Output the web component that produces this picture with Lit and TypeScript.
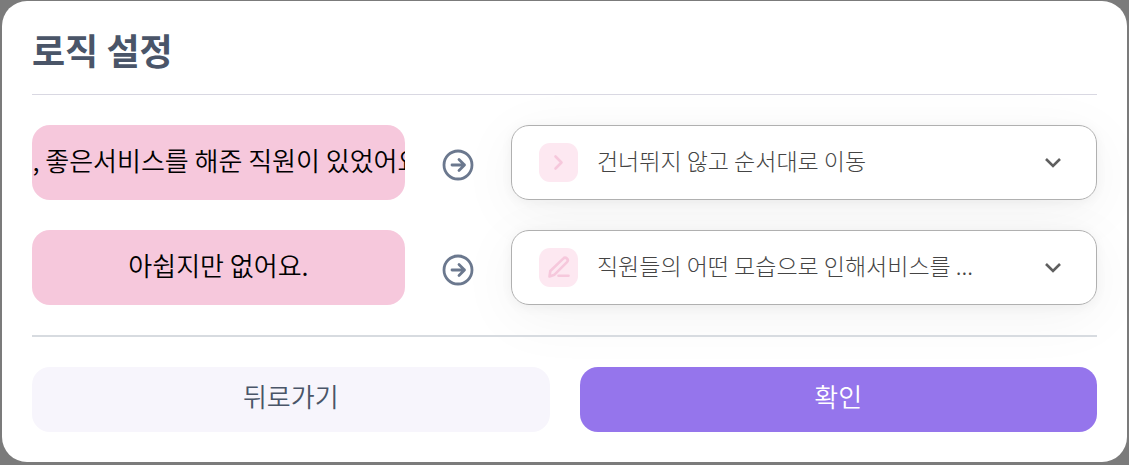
import { LitElement, html, css, svg } from "lit";
import { customElement, property } from "lit/decorators.js";

const nextIcon = svg`<path d="M16.500 13.500 22.500 19.500l-6 6" />`;
const penIcon = svg`
  <path d="M10.500 28.500l.8-5.500L24.200 10.600a2.600 2.600 0 0 1 3.800 3.600L15.500 26.700z" />
  <path d="M19.500 27.800h10" />`;

@customElement("logic-row")
export class LogicRow extends LitElement {
  @property() answer = "";
  @property() target = "";
  @property() kind = "next";
  @property() name = "";

  static styles = css`
    :host {
      display: grid;
      grid-template-columns: 35fr 106px 55fr;
      height: 75px;
    }
    .answer {
      display: flex;
      align-items: center;
      justify-content: center;
      overflow: hidden;
      min-width: 0;
      padding-bottom: 6px;
      border-radius: 18px;
      background: #f6c8dc;
      color: #000;
      font-size: 26px;
      font-weight: 350;
      white-space: nowrap;
      cursor: pointer;
    }
    .arrow {
      align-self: center;
      justify-self: center;
      width: 32px;
      height: 32px;
      margin-top: 4px;
      fill: none;
      stroke: #6b788e;
      stroke-width: 2.8;
      stroke-linecap: round;
      stroke-linejoin: round;
    }
    .field {
      display: grid;
      min-width: 0;
      align-items: center;
      border-radius: 18px;
      box-shadow:
        0 2px 12px rgba(0, 0, 0, 0.05),
        0 12px 60px rgba(0, 0, 0, 0.05);
    }
    .field > * {
      grid-area: 1 / 1;
    }
    select {
      z-index: 1;
      appearance: none;
      width: 100%;
      height: 100%;
      margin: 0;
      padding: 0 100px 6px 85px;
      border: 1px solid #b0b0b0;
      border-radius: 18px;
      background: #fff;
      color: #444;
      font: inherit;
      font-weight: 300;
      font-size: 23px;
      text-overflow: ellipsis;
    }
    .badge,
    .chevron {
      z-index: 2;
      pointer-events: none;
      fill: none;
      stroke-linejoin: round;
    }
    .badge {
      width: 39px;
      height: 39px;
      margin-left: 28px;
      border-radius: 11px;
      background: #fde8f1;
      stroke: #f6c8dc;
      stroke-width: 2.6;
      stroke-linecap: round;
    }
    .chevron {
      justify-self: end;
      width: 18px;
      height: 12px;
      margin-right: 35px;
      stroke: #5f5f5f;
      stroke-width: 2.6;
      stroke-linejoin: miter;
    }
  `;

  render() {
    return html`
      <label class="answer" for="target">${this.answer}</label>
      <svg class="arrow" viewBox="0 0 32 32" aria-hidden="true">
        <circle cx="16" cy="16" r="14" />
        <path d="M10 16h12.500M17 10.500l5.500 5.500-5.500 5.500" />
      </svg>
      <div class="field">
        <select id="target" name=${this.name}>
          <option>${this.target}</option>
        </select>
        <svg class="badge" viewBox="0 0 39 39" aria-hidden="true">
          ${this.kind === "pen" ? penIcon : nextIcon}
        </svg>
        <svg class="chevron" viewBox="0 0 18 12" aria-hidden="true">
          <path d="M2 2l7 7 7-7" />
        </svg>
      </div>
    `;
  }
}

@customElement("app-root")
export class AppRoot extends LitElement {
  static styles = css`
    :host {
      display: block;
      box-sizing: border-box;
      min-height: 100vh;
      padding: 1px 2px 3px;
      background: #7b7b7b;
      font-family: "Noto Sans CJK KR", sans-serif;
    }
    .dialog {
      padding: 26px 30px 30px;
      border-radius: 25px;
      background: #fff;
    }
    h1 {
      margin: 0 0 30px;
      padding-bottom: 23px;
      border-bottom: 1px solid #d9d8e2;
      color: #4a5568;
      font-size: 36px;
      font-weight: 700;
      line-height: 44px;
    }
    form {
      display: grid;
      gap: 30px;
    }
    hr {
      width: 100%;
      height: 2px;
      margin: 0;
      border: 0;
      background: #d7dbe0;
    }
    .actions {
      display: grid;
      grid-template-columns: 1fr 1fr;
      gap: 30px;
    }
    button {
      height: 65px;
      padding: 0 0 8px;
      border: 0;
      border-radius: 18px;
      font: inherit;
      font-size: 26px;
      font-weight: 350;
      cursor: pointer;
    }
    .back {
      background: #f7f5fc;
      color: #4a5568;
    }
    .confirm {
      background: #9575ec;
      color: #fff;
    }
  `;

  render() {
    return html`
      <main class="dialog">
        <h1>로직 설정</h1>
        <form @submit=${(e: Event) => e.preventDefault()}>
          <logic-row
            name="yes"
            answer="예, 좋은서비스를 해준 직원이 있었어요."
            target="건너뛰지 않고 순서대로 이동"
          ></logic-row>
          <logic-row
            name="no"
            kind="pen"
            answer="아쉽지만 없어요."
            target="직원들의 어떤 모습으로 인해서비스를 ..."
          ></logic-row>
          <hr />
          <div class="actions">
            <button class="back" type="button">뒤로가기</button>
            <button class="confirm" type="submit">확인</button>
          </div>
        </form>
      </main>
    `;
  }
}
